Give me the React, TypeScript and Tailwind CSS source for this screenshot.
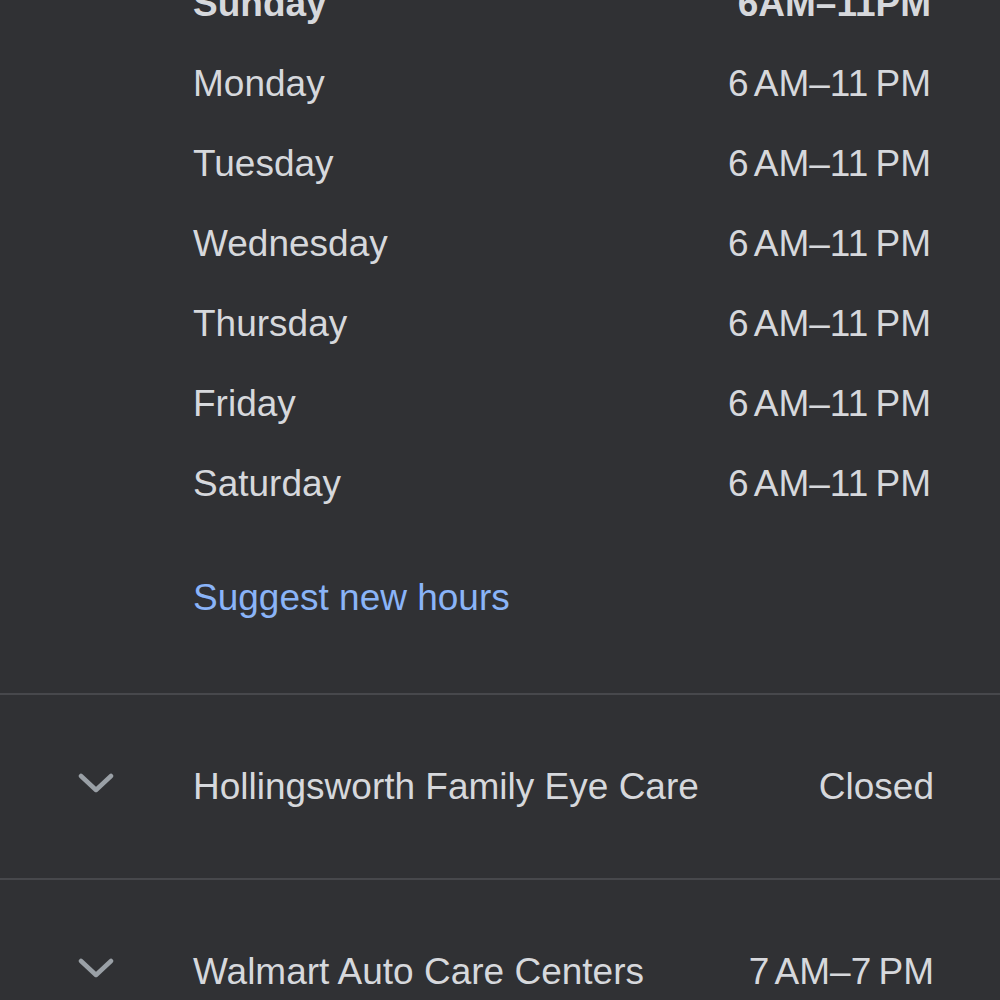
const hours = [
    { day: 'Sunday', time: '6AM–11PM', today: true },
    { day: 'Monday', time: '6 AM–11 PM' },
    { day: 'Tuesday', time: '6 AM–11 PM' },
    { day: 'Wednesday', time: '6 AM–11 PM' },
    { day: 'Thursday', time: '6 AM–11 PM' },
    { day: 'Friday', time: '6 AM–11 PM' },
    { day: 'Saturday', time: '6 AM–11 PM' },
];

const places = [
    { name: 'Hollingsworth Family Eye Care', status: 'Closed' },
    { name: 'Walmart Auto Care Centers', status: '7 AM–7 PM' },
];

const Chevron = () => (
    <svg width="36" height="22" viewBox="0 0 36 22" fill="none" className="text-[#9aa0a6]">
        <path d="M3 4l15 14L33 4" stroke="currentColor" strokeWidth="4.5" strokeLinecap="round" strokeLinejoin="round" />
    </svg>
);

const App = () => {
    return (
        <div className="w-[1000px] h-[1000px] overflow-hidden bg-[#303134] font-['Liberation_Sans',Arial,sans-serif] text-[37px] text-[#d6d8dc]">
            {/* Opening hours */}
            <div className="-mt-[36px]">
                {hours.map(h => (
                    <div key={h.day} className={`h-[80px] flex items-center justify-between pl-[193px] pr-[69px] ${h.today ? 'font-bold' : ''}`}>
                        <span>{h.day}</span>
                        <span className="[word-spacing:-3px]">{h.time}</span>
                    </div>
                ))}
                <div className="h-[80px] mt-[34px] mb-[55px] flex items-center pl-[193px]">
                    <span className="text-[#8ab4f8]">Suggest new hours</span>
                </div>
            </div>

            {/* Nearby places */}
            {places.map(p => (
                <div key={p.name} className="border-t-2 border-[#47484c] h-[185px] flex items-center pr-[66px]">
                    <div className="w-[193px] pl-[78px] flex items-center -mt-[8px]">
                        <Chevron />
                    </div>
                    <span className="flex-1">{p.name}</span>
                    <span className="[word-spacing:-3px]">{p.status}</span>
                </div>
            ))}
        </div>
    );
};

export default App;
